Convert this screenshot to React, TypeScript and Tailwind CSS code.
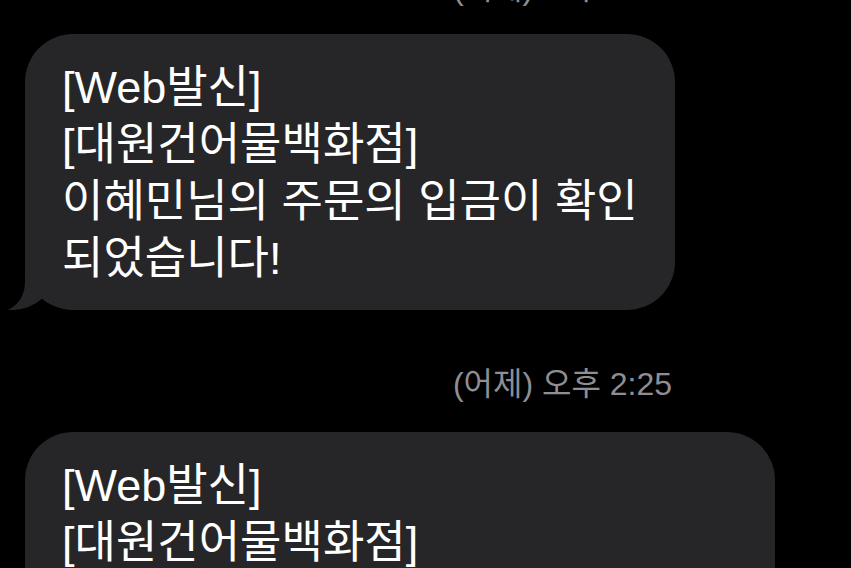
const font = { fontFamily: "'Liberation Sans', 'Noto Sans CJK KR', sans-serif" }

function Stamp({ text, className = '' }: { text: string; className?: string }) {
  return (
    <div className={`w-[1125px] h-[36px] leading-[36px] text-center text-[32px] text-[#8e8e93] ${className}`}>
      {text}
    </div>
  )
}

function Bubble({ lines, width, tail = false }: { lines: string[]; width: string; tail?: boolean }) {
  return (
    <div className="relative ml-[25px]">
      {tail && (
        <svg className="absolute left-[-25px] bottom-0" width="100" height="60" viewBox="0 250 100 60">
          <path d="M25,250 L25,283 Q24,302 8,310 Q28,311 43,298 Q56,310 78,310 L78,250 Z" fill="#262628" />
        </svg>
      )}
      <div className={`relative ${width} rounded-[48px] bg-[#262628] pl-[37px] pr-[30px] pt-[25px] pb-[23px] text-white text-[45px] leading-[57px]`}>
        {lines.map((l, i) => (
          <div key={i} className="whitespace-nowrap">{l}</div>
        ))}
      </div>
    </div>
  )
}

export default function App() {
  return (
    <div className="w-[851px] h-[568px] overflow-hidden bg-black" style={font}>
      <Stamp text="(어제) 오후 2:24" className="-mt-[30px]" />
      <div className="mt-[28px]">
        <Bubble
          width="w-[650px]"
          tail
          lines={['[Web발신]', '[대원건어물백화점]', '이혜민님의 주문의 입금이 확인', '되었습니다!']}
        />
      </div>
      <Stamp text="(어제) 오후 2:25" className="mt-[56px]" />
      <div className="mt-[30px]">
        <Bubble
          width="w-[750px]"
          lines={['[Web발신]', '[대원건어물백화점]', '이혜민님의 주문이 발송되었습니다.', '감사합니다.']}
        />
      </div>
    </div>
  )
}
